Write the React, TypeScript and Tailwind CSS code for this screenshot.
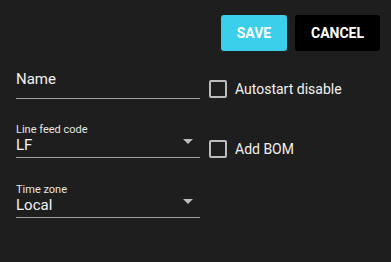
import React from 'react';

function Caret() {
    return (
        <svg width="10" height="5" viewBox="0 0 10 5" className="mt-[3px] mr-[7px] shrink-0">
            <path d="M0 0 L10 0 L5 5 Z" fill="#bdbdbd" />
        </svg>
    );
}

function Checkbox({ label }: { label: string }) {
    return (
        <div className="flex items-center gap-[8px]">
            <div className="w-[18px] h-[18px] border-2 border-[#bdbdbd] rounded-[2px]" />
            <span className="text-[14px] leading-[20px] text-[#f2f2f2]">{label}</span>
        </div>
    );
}

function SelectField({ label, value, className }: { label: string; value: string; className?: string }) {
    return (
        <div className={`border-b border-[#a0a0a0] pb-[3px] ${className ?? ''}`}>
            <div className="text-[11px] leading-[12px] text-[#e6e6e6]">{label}</div>
            <div className="flex items-start justify-between">
                <span className="text-[15px] leading-[18px] text-[#f2f2f2]">{value}</span>
                <Caret />
            </div>
        </div>
    );
}

export default function App() {
    return (
        <div className="w-[391px] h-[262px] bg-[#1e1e1e] font-['Roboto',sans-serif] text-white overflow-hidden">
            {/* action buttons */}
            <div className="flex justify-end gap-[8px] pt-[15px] pr-[11px]">
                <button className="h-[36px] w-[66px] rounded-[3px] bg-[#3bcfec] text-[14px] font-bold text-white">
                    SAVE
                </button>
                <button className="h-[36px] w-[85px] rounded-[3px] bg-black text-[14px] font-bold text-white">
                    CANCEL
                </button>
            </div>

            <div className="flex mt-[9px] pl-[16px]">
                <div className="w-[184px]">
                    <div className="h-[39px] pt-[7px] border-b border-[#a0a0a0]">
                        <span className="text-[15px] leading-[20px] text-[#f2f2f2]">Name</span>
                    </div>
                    <SelectField label="Line feed code" value="LF" className="mt-[25px]" />
                    <SelectField label="Time zone" value="Local" className="mt-[26px]" />
                </div>
                <div className="ml-[9px] pt-[19px] flex flex-col gap-[40px]">
                    <Checkbox label="Autostart disable" />
                    <Checkbox label="Add BOM" />
                </div>
            </div>
        </div>
    );
}
